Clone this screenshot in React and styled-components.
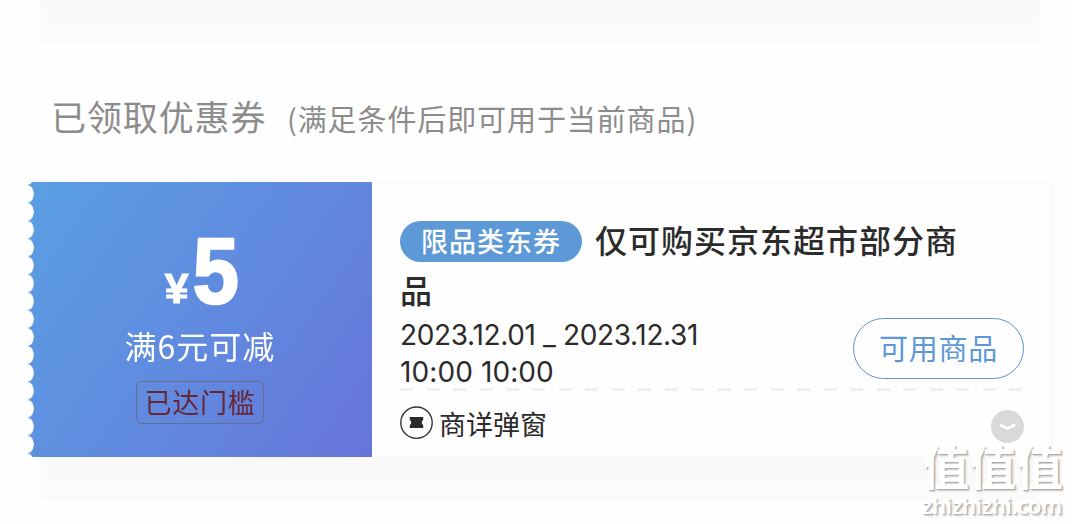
import React from 'react'
import styled, { createGlobalStyle } from 'styled-components'

const coupon = {
    amount: '5',
    condition: '满6元可减',
    status: '已达门槛',
    tag: '限品类东券',
    title: '仅可购买京东超市部分商品',
    dates: '2023.12.01 _ 2023.12.31',
    hours: '10:00 10:00',
    source: '商详弹窗',
}

const TicketIcon = () => (
    <svg width="34" height="34" viewBox="0 0 34 34" fill="none">
        <circle cx="16.5" cy="16.7" r="15.7" stroke="#333" strokeWidth="1.4" />
        <path d="M9.8 10.9h13.4v3q-1.4.8-1.4 2.6t1.4 2.6v3H9.8v-3q1.4-.8 1.4-2.6t-1.4-2.6z" fill="#2b2b2b" />
    </svg>
)

const ChevronIcon = () => (
    <svg width="34" height="34" viewBox="0 0 34 34" fill="none">
        <circle cx="17.5" cy="16.5" r="16.5" fill="#d9d9d9" />
        <path d="M11 15.2l6.5 3.4 6.5-3.4" stroke="#fff" strokeWidth="2.8" strokeLinecap="round" strokeLinejoin="round" />
    </svg>
)

const App = () => (
    <Page>
        <GlobalStyle />
        <Shade />
        <Heading>
            <HeadingTitle>已领取优惠券</HeadingTitle>
            <HeadingNote>(满足条件后即可用于当前商品)</HeadingNote>
        </Heading>
        <Coupon>
            <Value>
                <Amount>
                    <Currency>¥</Currency>
                    <Figure>{coupon.amount}</Figure>
                </Amount>
                <Condition>{coupon.condition}</Condition>
                <Status>{coupon.status}</Status>
            </Value>
            <Detail>
                <Title><Tag>{coupon.tag}</Tag>{coupon.title}</Title>
                <Middle>
                    <Period>
                        <Dates>{coupon.dates}</Dates>
                        <Hours>{coupon.hours}</Hours>
                    </Period>
                    <UseButton>可用商品</UseButton>
                </Middle>
                <Divider />
                <Footer>
                    <Source><TicketIcon /><span>{coupon.source}</span></Source>
                    <Toggle><ChevronIcon /></Toggle>
                </Footer>
            </Detail>
        </Coupon>
        <Shade />
        <Watermark>
            <WatermarkName>值值值</WatermarkName>
            <WatermarkSite>zhizhizhi.com</WatermarkSite>
        </Watermark>
    </Page>
)

export default App

const GlobalStyle = createGlobalStyle`
    * {
        box-sizing: border-box;
    }
    body {
        margin: 0;
        background: #fefefe;
        overflow: hidden;
    }
`

const Page = styled.div`
    position: relative;
    width: 1072px;
    height: 524px;
    overflow: hidden;
    background: #fefefe;
    font-family: 'Noto Sans CJK SC', sans-serif;
    color: #2b2b2b;
`

const Shade = styled.div`
    height: 43px;
    margin: 0 28px 0 37px;
    background: linear-gradient(90deg, #fefefe, #f9f9f900 8px, #f9f9f900 calc(100% - 8px), #fefefe), linear-gradient(#f9f9f9, #fbfbfb);
`

const Heading = styled.div`
    display: flex;
    align-items: baseline;
    height: 139px;
    padding: 47px 0 0 51px;
    line-height: 52px;
    color: #8c8c8c;
    white-space: nowrap;
`

const HeadingTitle = styled.div`
    width: 236px;
    font-size: 35px;
    letter-spacing: 0.9px;
`

const HeadingNote = styled.div`
    font-size: 29px;
    letter-spacing: 0.9px;
`

const Coupon = styled.div`
    display: flex;
    width: 1024px;
    height: 275px;
    margin-left: 28px;
    background: #fefefe;
    border-right: 1px solid #f3f3f3;
    box-shadow: inset 0 1px 0 #f7f7f7;
`

const Value = styled.div`
    display: flex;
    flex-direction: column;
    align-items: center;
    width: 344px;
    height: 275px;
    padding-top: 49px;
    color: #fff;
    background: linear-gradient(125deg, #5a9fe2 0%, #6189df 55%, #6774d9 100%);
    mask: radial-gradient(ellipse 6px 9px at 0 50%, transparent 90%, #000 100%) 0 3px / 100% 17.9px repeat-y;
`

const Amount = styled.div`
    display: flex;
    align-items: baseline;
    height: 92px;
    padding-left: 6px;
    line-height: 80px;
    font-family: 'Liberation Sans', Arial, sans-serif;
    font-weight: 700;
`

const Currency = styled.span`
    font-size: 43px;
    -webkit-text-stroke: 1px #fff;
`

const Figure = styled.span`
    margin-left: 1px;
    font-size: 93px;
    transform: scaleX(0.89);
    -webkit-text-stroke: 2.5px #fff;
`

const Condition = styled.div`
    height: 46px;
    font-size: 32px;
    line-height: 44px;
    letter-spacing: 1px;
`

const Status = styled.div`
    width: 128px;
    height: 43px;
    margin-top: 12px;
    border: 1px solid #6a6d87;
    border-radius: 6px;
    color: #662733;
    font-size: 27px;
    line-height: 39px;
    text-align: center;
    letter-spacing: 0.7px;
`

const Detail = styled.div`
    flex: 1;
    padding: 32px 27px 0 28px;
`

const Title = styled.div`
    width: 570px;
    height: 103px;
    font-size: 32px;
    font-weight: 500;
    line-height: 50px;
    letter-spacing: 1px;
`

const Tag = styled.span`
    display: inline-block;
    width: 182px;
    height: 41px;
    margin-right: 13px;
    border-radius: 21px;
    background: #5c99d6;
    color: #fff;
    font-size: 27px;
    line-height: 40px;
    text-align: center;
    vertical-align: 1px;
`

const Middle = styled.div`
    display: flex;
    justify-content: space-between;
    height: 71px;
`

const Period = styled.div`
    font-family: Inter, 'Noto Sans CJK SC', sans-serif;
    font-size: 28px;
    line-height: 37px;
    white-space: nowrap;
`

const Dates = styled.div`
    letter-spacing: -0.35px;
`

const Hours = styled.div`
    letter-spacing: 0.1px;
`

const UseButton = styled.button`
    width: 171px;
    height: 61px;
    margin-top: 1px;
    padding: 0 0 4px;
    border: 1px solid #5c94cc;
    border-radius: 31px;
    background: transparent;
    color: #5c99d6;
    font-family: inherit;
    font-size: 29px;
    line-height: 54px;
    letter-spacing: 0.8px;
`

const Divider = styled.div`
    height: 3px;
    background: repeating-linear-gradient(90deg, #f0f0f0 0 13px, transparent 13px 26.5px);
`

const Footer = styled.div`
    display: flex;
    justify-content: space-between;
    padding-top: 15px;
`

const Source = styled.div`
    display: flex;
    gap: 5px;
    height: 34px;
    font-size: 27px;
    line-height: 35px;
`

const Toggle = styled.div`
    height: 34px;
    margin-top: 4px;
`

const Watermark = styled.div`
    position: absolute;
    left: 922px;
    top: 435px;
    color: #fff;
    text-shadow: 1px 1px 1px #aaa, 2px 2px 2px #ccc;
    white-space: nowrap;
`

const WatermarkName = styled.div`
    height: 57px;
    font-size: 47px;
    font-weight: 700;
    line-height: 60px;
`

const WatermarkSite = styled.div`
    font-family: 'Open Sans', sans-serif;
    font-size: 22px;
    font-weight: 600;
    line-height: 26px;
    letter-spacing: -0.25px;
`
